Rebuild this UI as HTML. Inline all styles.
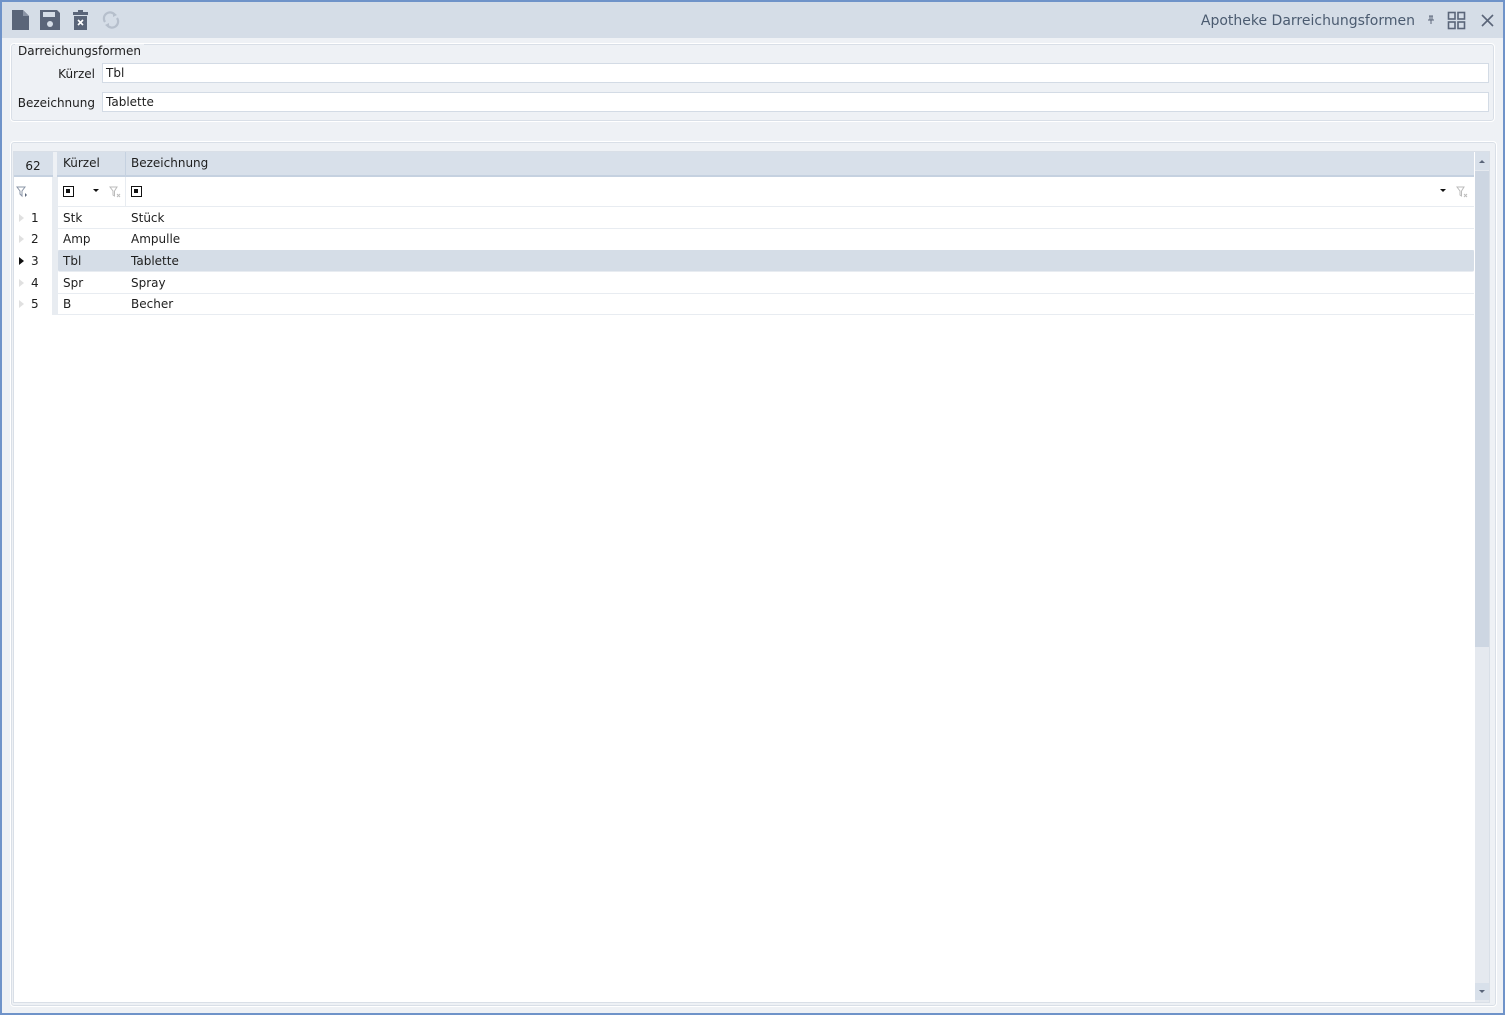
<!DOCTYPE html>
<html><head><meta charset="utf-8"><style>
*{box-sizing:border-box;margin:0;padding:0}
body{width:1505px;height:1015px;overflow:hidden;background:#eef1f5;font-family:"DejaVu Sans","Liberation Sans",sans-serif;font-size:12px;color:#1e1e1e;position:relative}
.win{position:absolute;left:0;top:0;width:1505px;height:1015px;background:#eef1f5}
.frame{position:absolute;left:0;top:0;width:1505px;height:1015px;border:2px solid #6f93c9;z-index:9;pointer-events:none}
.tb{position:absolute;left:0;top:0;right:0;height:38px;background:#d5dde7}
.title{position:absolute;right:90px;top:13px;font-size:14px;color:#4b5b70}
.abs{position:absolute}
.grp{position:absolute;left:10px;top:43px;width:1485px;height:79px;border:1px solid #fff;box-shadow:inset 0 0 0 1px #d9dfe7;border-radius:4px}
.grp .lg{position:absolute;left:4px;top:0px;background:#eef1f5;padding:0 3px;font-size:12px;color:#1e1e1e}
.inp{position:absolute;background:#fff;border:1px solid #d3dbe5;height:20px;padding:2px 3px 0;font-size:12px}
.lbl{position:absolute;font-size:12px;text-align:right}
.gp{position:absolute;left:10px;top:141px;width:1487px;height:866px;border:1px solid #fff;box-shadow:inset 0 0 0 1px #d9dfe7;border-radius:4px}
.grid{position:absolute;left:13px;top:151px;width:1477px;height:852px;background:#fff;border:1px solid #d9dfe7}
.hdr{position:absolute;left:0;top:0;width:1460px;height:25px;background:#d8e0ea;border-bottom:2px solid #c5d1e0}
.row{position:absolute;left:0;width:1460px;height:22px;border-bottom:1px solid #e8ecf1}
.sb{position:absolute;left:1461px;top:0;width:14px;height:850px;background:#e5e9ef}
</style></head><body>
<div class="frame"></div>
<div class="win">
 <div class="tb">
  <svg class="abs" style="left:11px;top:9px" width="20" height="22" viewBox="0 0 20 22"><path d="M1 1h11l6 6v14H1z" fill="#5a6579"/><path d="M12 1v6h6" fill="#8a94a6"/></svg>
  <svg class="abs" style="left:39px;top:9px" width="22" height="22" viewBox="0 0 22 22"><path d="M1 1h17l3 3v17H1z" fill="#5a6579"/><rect x="4" y="3" width="12" height="5" fill="#d5dde7"/><circle cx="11" cy="15" r="3" fill="#d5dde7"/></svg>
  <svg class="abs" style="left:72px;top:10px" width="18" height="22" viewBox="0 0 18 22"><rect x="1" y="2" width="15" height="3" fill="#5a6579"/><rect x="6" y="0" width="5" height="2" fill="#5a6579"/><path d="M2 6h13v14H2z" fill="#5a6579"/><path d="M6 10l5 5M11 10l-5 5" stroke="#fff" stroke-width="1.6"/></svg>
  <svg class="abs" style="left:101px;top:10px" width="20" height="20" viewBox="0 0 20 20"><path d="M4 12A6 6 0 0 1 14 5M16 8a6 6 0 0 1-10 7" stroke="#b6bfcc" stroke-width="2.2" fill="none"/><path d="M12 2l4 3-4 2z M8 18l-4-3 4-2z" fill="#b6bfcc"/></svg>
  <div class="title">Apotheke Darreichungsformen</div>
  <svg class="abs" style="left:1427px;top:15px" width="8" height="10" viewBox="0 0 8 10"><path d="M2 1h4M3 1v4M5 1v4M1 5h6M4 5v4" stroke="#5a6579" stroke-width="1"/></svg>
  <svg class="abs" style="left:1447px;top:11px" width="20" height="20" viewBox="0 0 20 20"><g fill="none" stroke="#5a6579" stroke-width="1.6"><rect x="1.5" y="1.5" width="6.5" height="6.5"/><rect x="11" y="1.5" width="6.5" height="6.5"/><rect x="1.5" y="11" width="6.5" height="6.5"/><rect x="11" y="11" width="6.5" height="6.5"/></g></svg>
  <svg class="abs" style="left:1481px;top:14px" width="14" height="14" viewBox="0 0 14 14"><path d="M1 1l11 11M12 1L1 12" stroke="#5a6579" stroke-width="1.6"/></svg>
 </div>
 <div class="grp"><div class="lg">Darreichungsformen</div></div>
 <div class="lbl" style="left:30px;top:67px;width:65px">Kürzel</div>
 <div class="inp" style="left:102px;top:63px;width:1387px">Tbl</div>
 <div class="lbl" style="left:10px;top:96px;width:85px">Bezeichnung</div>
 <div class="inp" style="left:102px;top:92px;width:1387px">Tablette</div>
 <div class="gp"></div>
 <div class="grid">
  <div class="hdr">
   <div class="abs" style="left:0;top:0;width:38px;height:25px;text-align:center;line-height:24px;padding-top:2px">62</div>
   <div class="abs" style="left:39px;top:0;width:4px;height:25px;background:#eef1f5"></div>
   <div class="abs" style="left:49px;top:4px">Kürzel</div>
   <div class="abs" style="left:111px;top:0;width:1px;height:25px;background:#c5d1e0"></div>
   <div class="abs" style="left:117px;top:4px">Bezeichnung</div>
  </div>
  <div class="abs" style="left:38px;top:25px;width:6px;height:138px;background:#e8ecf1"></div>
  <div class="row" style="top:25px;height:30px;left:44px;width:1416px"></div>
  <svg class="abs" style="left:2px;top:34px" width="12" height="12" viewBox="0 0 12 12"><path d="M1 1h8L6 5v5L4 8V5z" fill="none" stroke="#8a94a6"/><path d="M9 7l2 2-2 2z" fill="#5a6579"/></svg>
  <div class="abs" style="left:49px;top:34px;width:11px;height:11px;border:1.5px solid #111"><div style="margin:2px;width:4px;height:4px;background:#111"></div></div>
  <div class="abs" style="left:79px;top:37px;border:3px solid transparent;border-top:3px solid #111"></div>
  <svg class="abs" style="left:95px;top:34px" width="12" height="12" viewBox="0 0 12 12"><path d="M1 1h7L5.5 5v5L4 9V5z" fill="none" stroke="#bbb"/><path d="M8 8l3 3M11 8l-3 3" stroke="#bbb"/></svg>
  <div class="abs" style="left:111px;top:25px;width:1px;height:30px;background:#e8ecf1"></div>
  <div class="abs" style="left:117px;top:34px;width:11px;height:11px;border:1.5px solid #111"><div style="margin:2px;width:4px;height:4px;background:#111"></div></div>
  <div class="abs" style="left:1426px;top:37px;border:3px solid transparent;border-top:3px solid #111"></div>
  <svg class="abs" style="left:1442px;top:34px" width="12" height="12" viewBox="0 0 12 12"><path d="M1 1h7L5.5 5v5L4 9V5z" fill="none" stroke="#bbb"/><path d="M8 8l3 3M11 8l-3 3" stroke="#bbb"/></svg>
  <div class="row" style="top:55px;left:44px;width:1416px"></div>
  <div class="row" style="top:77px;left:44px;width:1416px"></div>
  <div class="row" style="top:98px;left:44px;width:1416px;background:#d5dde7;border-radius:2px"></div>
  <div class="row" style="top:120px;left:44px;width:1416px"></div>
  <div class="row" style="top:141px;left:44px;width:1416px"></div>
  <div class="abs" style="left:5px;top:62px;border:4px solid transparent;border-left:5px solid #e0e0e0;border-right:0"></div>
  <div class="abs" style="left:5px;top:83px;border:4px solid transparent;border-left:5px solid #e0e0e0;border-right:0"></div>
  <div class="abs" style="left:5px;top:105px;border:4px solid transparent;border-left:5px solid #111;border-right:0"></div>
  <div class="abs" style="left:5px;top:127px;border:4px solid transparent;border-left:5px solid #e0e0e0;border-right:0"></div>
  <div class="abs" style="left:5px;top:148px;border:4px solid transparent;border-left:5px solid #e0e0e0;border-right:0"></div>
  <div class="abs" style="left:17px;top:59px">1</div><div class="abs" style="left:49px;top:59px">Stk</div><div class="abs" style="left:117px;top:59px">Stück</div>
  <div class="abs" style="left:17px;top:80px">2</div><div class="abs" style="left:49px;top:80px">Amp</div><div class="abs" style="left:117px;top:80px">Ampulle</div>
  <div class="abs" style="left:17px;top:102px">3</div><div class="abs" style="left:49px;top:102px">Tbl</div><div class="abs" style="left:117px;top:102px">Tablette</div>
  <div class="abs" style="left:17px;top:124px">4</div><div class="abs" style="left:49px;top:124px">Spr</div><div class="abs" style="left:117px;top:124px">Spray</div>
  <div class="abs" style="left:17px;top:145px">5</div><div class="abs" style="left:49px;top:145px">B</div><div class="abs" style="left:117px;top:145px">Becher</div>
  <div class="sb">
   <div class="abs" style="left:0;top:0;width:14px;height:18px;background:#d8e0ea"></div>
   <div class="abs" style="left:4px;top:5px;border:3px solid transparent;border-bottom:3px solid #5a6579"></div>
   <div class="abs" style="left:0;top:19px;width:14px;height:476px;background:#cdd6e2"></div>
   <div class="abs" style="left:0;top:831px;width:14px;height:17px;background:#d8e0ea"></div>
   <div class="abs" style="left:4px;top:838px;border:3px solid transparent;border-top:3px solid #5a6579"></div>
  </div>
 </div>
</div>
</body></html>
